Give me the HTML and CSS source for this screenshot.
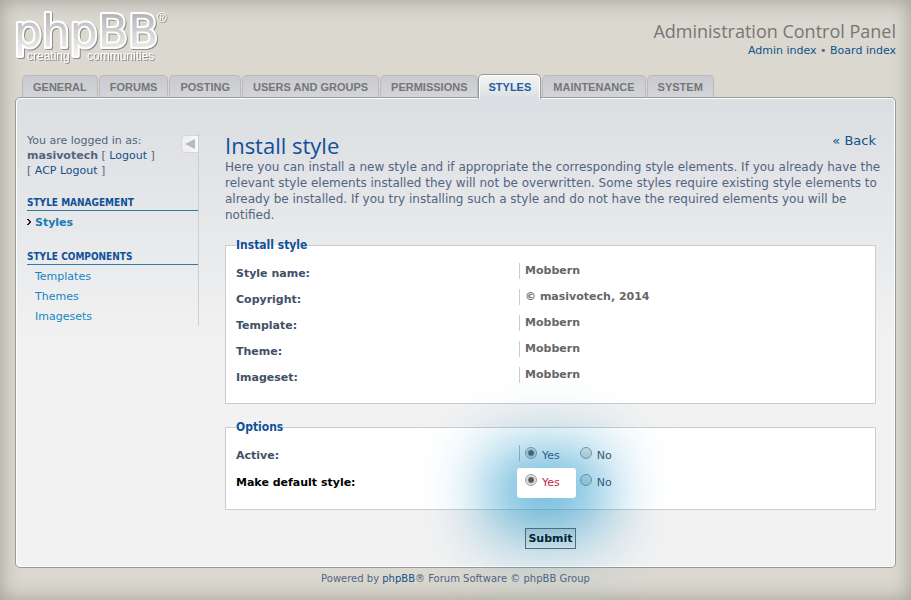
FILE: index.html
```html
<!DOCTYPE html>
<html lang="en">
<head>
<meta charset="utf-8">
<meta name="viewport" content="width=device-width, initial-scale=1">
<title>Administration Control Panel</title>
<link rel="stylesheet" href="styles.css">
</head>
<body>
<div class="page">
  <header class="header">
    <svg class="logo" viewBox="0 0 154 54" role="img" aria-label="phpBB creating communities">
      <defs>
        <linearGradient id="metal" gradientUnits="userSpaceOnUse" x1="0" y1="2" x2="0" y2="42">
          <stop offset="0" stop-color="#b2b2b5"/>
          <stop offset="1" stop-color="#f0f0f0"/>
        </linearGradient>
      </defs>
      <text x="-1" y="37" class="logo-word">phpBB</text>
      <g class="logo-tag">
        <text x="12" y="50">creating</text>
        <text x="72" y="50">communities</text>
      </g>
      <text x="142" y="12" class="logo-reg">®</text>
    </svg>
    <div class="heading">
      <h1>Administration Control Panel</h1>
      <p><a href="#">Admin index</a> • <a href="#">Board index</a></p>
    </div>
  </header>

  <nav class="tabs">
    <a href="#">GENERAL</a>
    <a href="#">FORUMS</a>
    <a href="#">POSTING</a>
    <a href="#">USERS AND GROUPS</a>
    <a href="#">PERMISSIONS</a>
    <a href="#" class="active">STYLES</a>
    <a href="#">MAINTENANCE</a>
    <a href="#">SYSTEM</a>
  </nav>

  <div class="panel">
    <aside class="menu">
      <button type="button" class="toggle" aria-label="Hide menu">
        <svg viewBox="0 0 10 10" width="10" height="10"><path d="M0 5 10 0V10Z" fill="#b9babc"/></svg>
      </button>
      <p class="user">You are logged in as:<br><strong>masivotech</strong> [ <a href="#">Logout</a> ]<br>[ <a href="#">ACP Logout</a> ]</p>
      <h2>STYLE MANAGEMENT</h2>
      <ul>
        <li class="current">
          <svg class="marker" viewBox="0 0 4 6" width="4" height="6" shape-rendering="crispEdges"><path d="M0 0h2v1H0ZM1 1h2v1H1ZM2 2h2v2H2ZM1 4h2v1H1ZM0 5h2v1H0Z" fill="#222"/></svg>
          <a href="#">Styles</a>
        </li>
      </ul>
      <h2>STYLE COMPONENTS</h2>
      <ul>
        <li><a href="#">Templates</a></li>
        <li><a href="#">Themes</a></li>
        <li><a href="#">Imagesets</a></li>
      </ul>
    </aside>

    <main class="main">
      <p class="back"><a href="#">« Back</a></p>
      <h2 class="title">Install style</h2>
      <p class="intro">Here you can install a new style and if appropriate the corresponding style elements. If you already have the relevant style elements installed they will not be overwritten. Some styles require existing style elements to already be installed. If you try installing such a style and do not have the required elements you will be notified.</p>
      <form>
        <fieldset class="details">
          <legend>Install style</legend>
          <dl><dt>Style name:</dt><dd>Mobbern</dd></dl>
          <dl><dt>Copyright:</dt><dd>© masivotech, 2014</dd></dl>
          <dl><dt>Template:</dt><dd>Mobbern</dd></dl>
          <dl><dt>Theme:</dt><dd>Mobbern</dd></dl>
          <dl><dt>Imageset:</dt><dd>Mobbern</dd></dl>
        </fieldset>
        <fieldset class="options">
          <legend>Options</legend>
          <dl>
            <dt>Active:</dt>
            <dd>
              <label class="yes"><input type="radio" name="active" checked>Yes</label>
              <label><input type="radio" name="active">No</label>
            </dd>
          </dl>
          <dl class="hover">
            <dt>Make default style:</dt>
            <dd>
              <label class="spotlight"><input type="radio" name="default" checked>Yes</label>
              <label><input type="radio" name="default">No</label>
            </dd>
          </dl>
        </fieldset>
        <p class="submit"><button type="submit">Submit</button></p>
      </form>
    </main>
  </div>

  <footer class="footer">Powered by <a href="#">phpBB</a>® Forum Software © phpBB Group</footer>
</div>
</body>
</html>
```
FILE: styles.css
```css
* { box-sizing: border-box; }

body {
  margin: 0;
  font: 11px/15px "DejaVu Sans", Verdana, sans-serif;
  color: #536482;
  background: #dbd8d0;
}

h1, h2, p, ul, dl, dd { margin: 0; padding: 0; }
ul { list-style: none; }
a { color: #105289; text-decoration: none; }

.page {
  min-height: 100vh;
  padding: 0 15px;
  box-shadow: inset 0 0 20px rgba(70, 65, 60, .4);
  overflow: hidden;
}

.header {
  display: flex;
  justify-content: space-between;
  height: 75px;
  padding-top: 10px;
}
.logo { width: 154px; height: 54px; overflow: visible; filter: drop-shadow(1px 1px 0 #8c8c8a); }
.logo-word {
  font: 44px "DejaVu Sans", Verdana, sans-serif;
  fill: url(#metal);
  stroke: #fff;
  stroke-width: 4px;
  stroke-linejoin: round;
  paint-order: stroke;
}
.logo-tag { font: 12px "Liberation Sans", Arial, sans-serif; fill: #fff; }
.logo-reg { font: 13px "Liberation Sans", Arial, sans-serif; fill: #fff; }

.heading { padding-top: 9px; text-align: right; }
.heading h1 { font: 18px/24px "Open Sans", "Trebuchet MS", sans-serif; color: #767676; }

.tabs {
  display: flex;
  align-items: flex-end;
  gap: 1px;
  height: 23px;
  margin: 0 7px -1px;
  position: relative;
}
.tabs a {
  height: 23px;
  padding: 0 10px 0 10px;
  border: 1px solid #b9b9b9;
  border-bottom-color: #999;
  border-radius: 5px 5px 0 0;
  background: linear-gradient(#c9cacf, #d3d5d9);
  font: bold 11px/22px "Liberation Sans", Arial, sans-serif;
  color: #767676;
  white-space: nowrap;
}
.tabs .active {
  height: 25px;
  margin: 0 0 -1px -1px;
  padding: 0 9px;
  border-color: #999;
  border-bottom: 0;
  background: linear-gradient(#f4f4f5, #dcdfe2);
  box-shadow: inset 1px 1px #fff, inset -1px 0 #fff;
  line-height: 25px;
  color: #235fa0;
}

.panel {
  display: flex;
  align-items: flex-start;
  gap: 26px;
  padding: 34px 19px 18px 11px;
  border: 1px solid #999;
  border-radius: 5px;
  background: linear-gradient(#dbdee2, #f2f2f2 250px);
  box-shadow: inset 0 0 0 1px #fff;
}

.menu {
  position: relative;
  flex: 0 0 172px;
  padding-top: 1px;
  border-right: 1px solid #ccced3;
}
.toggle {
  position: absolute;
  top: 3px;
  right: 0;
  display: flex;
  align-items: center;
  justify-content: center;
  width: 17px;
  height: 18px;
  padding: 0;
  border: 1px solid #d6d6d8;
  border-right: 0;
  border-radius: 4px 0 0 4px;
  background: linear-gradient(90deg, #eee, #f8f8f8);
}
.user { margin-bottom: 16px; }
.menu h2 {
  margin-bottom: 1px;
  padding: 3px 0 1px;
  border-bottom: 1px solid #327aa5;
  font: bold 10px/12px "DejaVu Sans Condensed", Tahoma, sans-serif;
  color: #115098;
}
.menu li { display: flex; align-items: center; height: 20px; padding-left: 8px; }
.menu li a { color: #1585c4; }
.menu .current { gap: 4px; margin-bottom: 16px; padding-left: 0; font-weight: bold; }

.menu .current a { color: #1c78b4; }

.main { flex: 1; min-width: 0; }
.back { float: right; font-size: 13px; line-height: 18px; }
.title { font: 22px/26px "Open Sans", "Trebuchet MS", sans-serif; color: #115098; }
.intro { margin-right: -10px; padding-top: 1px; font-size: 12px; line-height: 16px; }

fieldset {
  margin: 0;
  padding: 0 10px;
  border: 1px solid #ccc;
  background: #fff;
}
legend { padding: 0; font: bold 12px/16px "DejaVu Sans Condensed", Tahoma, sans-serif; color: #115098; }
.details { margin-top: 14px; padding-bottom: 12px; }
.options { margin-top: 15px; padding-bottom: 12px; }
dl { display: grid; grid-template-columns: 45fr 55fr; height: 26px; }
.details dl:first-of-type, .options dl:first-of-type { margin-top: 8px; }
dt { padding-top: 5px; font-weight: bold; color: #425067; }
dd {
  height: 16px;
  margin-top: 2px;
  padding-left: 5px;
  border-left: 1px solid #ccc;
  font-weight: bold;
  line-height: 16px;
  color: #666;
}
.hover dt { color: #000; }

.options dl { height: 27px; }
.options dd { display: flex; border-color: #bbb; font-weight: normal; }
.options .hover dd { border-color: transparent; }
label { display: flex; align-items: center; height: 21px; color: #425067; }
input[type="radio"] {
  appearance: none;
  width: 12px;
  height: 12px;
  margin: 0 5px 6px 0;
  border: 1px solid #999;
  border-radius: 50%;
  background: linear-gradient(#eee, #ddd);
}
input[type="radio"]:checked { background: radial-gradient(circle, #555 0 2px, #e6e6e6 4px); }
.yes { margin-right: 20px; }
.spotlight {
  position: relative;
  z-index: 1;
  height: 30px;
  margin: -4px 4px 0 -8px;
  padding: 0 16px 0 8px;
  border-radius: 3px;
  background: #fff;
  box-shadow: 0 10px 60px 32px rgba(0, 136, 195, .5), 0 4px 40px 4px rgba(0, 136, 195, .15);
  color: #bc2a4d;
}

.submit { padding-top: 18px; text-align: center; }
.submit button {
  height: 21px;
  padding: 0 2px;
  border: 1px solid #666;
  background: linear-gradient(#ddd, #f4f4f4);
  font: bold 11px/16px "DejaVu Sans", Verdana, sans-serif;
  color: #000;
}

.footer { padding: 3px 0 14px; text-align: center; font-size: 10px; }
```
